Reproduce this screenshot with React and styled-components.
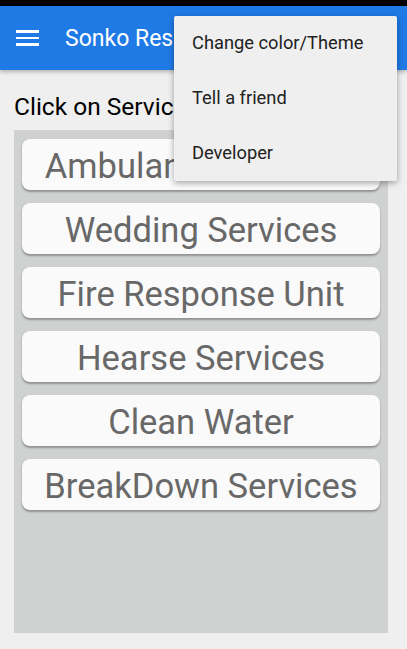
import React from "react";
import styled, { createGlobalStyle } from "styled-components";

const GlobalStyle = createGlobalStyle`
  html, body {
    margin: 0;
    padding: 0;
    background: #efefef;
    font-family: Roboto, "Noto Sans", sans-serif;
  }
`;

const Screen = styled.div`
  position: relative;
  width: 407px;
  height: 649px;
  overflow: hidden;
  display: flex;
  flex-direction: column;
  background: #efefef;
`;

const StatusBar = styled.div`
  height: 6px;
  background: #000;
`;

const AppBar = styled.header`
  height: 64px;
  background: #1f7ae6;
  display: flex;
  align-items: center;
  padding-left: 16px;
  gap: 26px;
  box-shadow: 0 2px 4px rgba(0, 0, 0, 0.25);
  position: relative;
  z-index: 1;
`;

const MenuButton = styled.div`
  width: 23px;
  display: flex;
  flex-direction: column;
  gap: 4px;
  span {
    height: 2.5px;
    background: #fff;
  }
`;

const Title = styled.h1`
  margin: 0;
  font-size: 23px;
  font-weight: 400;
  color: #fff;
  white-space: nowrap;
`;

const Content = styled.main`
  flex: 1;
  display: flex;
  flex-direction: column;
  padding: 24px 19px 16px 14px;
`;

const Heading = styled.p`
  margin: 0 0 10px;
  font-size: 24.5px;
  line-height: 26px;
  color: #000;
  white-space: nowrap;
`;

const Panel = styled.div`
  flex: 1;
  background: #d0d1d1;
  padding: 9px 8px;
  display: flex;
  flex-direction: column;
  gap: 13px;
`;

const ServiceButton = styled.div`
  height: 51px;
  box-sizing: border-box;
  padding-top: 2px;
  background: #fafafa;
  border-radius: 8px;
  box-shadow: 0 1.5px 2px rgba(0, 0, 0, 0.3);
  display: flex;
  align-items: center;
  justify-content: center;
  font-size: 34.5px;
  color: #686868;
  white-space: nowrap;
`;

const Menu = styled.div`
  position: absolute;
  top: 16px;
  left: 174px;
  width: 223px;
  background: #efefef;
  box-shadow: 0 2px 6px rgba(0, 0, 0, 0.35);
  border-radius: 2px;
  z-index: 2;
`;

const MenuItem = styled.div`
  height: 55px;
  display: flex;
  align-items: center;
  padding-left: 18px;
  padding-bottom: 2px;
  box-sizing: border-box;
  font-size: 18.3px;
  color: #222;
`;

const services = [
  "Ambulance Services",
  "Wedding Services",
  "Fire Response Unit",
  "Hearse Services",
  "Clean Water",
  "BreakDown Services",
];

const menuItems = ["Change color/Theme", "Tell a friend", "Developer"];

export default function App() {
  return (
    <Screen>
      <GlobalStyle />
      <StatusBar />
      <AppBar>
        <MenuButton>
          <span />
          <span />
          <span />
        </MenuButton>
        <Title>Sonko Response</Title>
      </AppBar>
      <Content>
        <Heading>Click on Service to request</Heading>
        <Panel>
          {services.map((s) => (
            <ServiceButton key={s}>{s}</ServiceButton>
          ))}
        </Panel>
      </Content>
      <Menu>
        {menuItems.map((m) => (
          <MenuItem key={m}>{m}</MenuItem>
        ))}
      </Menu>
    </Screen>
  );
}
